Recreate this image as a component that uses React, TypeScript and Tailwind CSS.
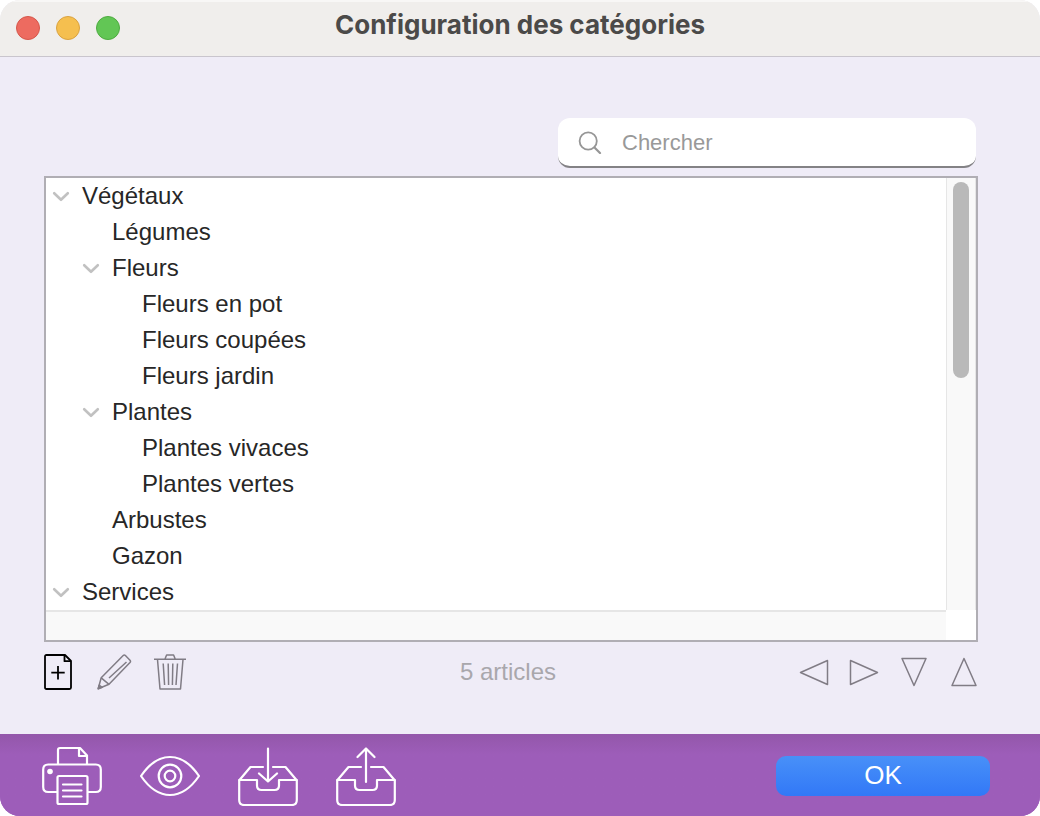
import { useState, type ReactNode } from "react";

type Category = { name: string; children?: Category[] };

const categories: Category[] = [
  {
    name: "Végétaux",
    children: [
      { name: "Légumes" },
      {
        name: "Fleurs",
        children: [{ name: "Fleurs en pot" }, { name: "Fleurs coupées" }, { name: "Fleurs jardin" }],
      },
      {
        name: "Plantes",
        children: [{ name: "Plantes vivaces" }, { name: "Plantes vertes" }],
      },
      { name: "Arbustes" },
      { name: "Gazon" },
    ],
  },
  { name: "Services", children: [] },
];

function CategoryNode({ category }: { category: Category }) {
  const [open, setOpen] = useState(true);
  return (
    <li>
      <div className="flex h-9 items-center gap-3">
        {category.children ? (
          <button
            type="button"
            aria-label={category.name}
            aria-expanded={open}
            onClick={() => setOpen(!open)}
            className="flex h-9 w-[18px] items-center justify-center"
          >
            <svg
              viewBox="0 0 18 12"
              className={open ? "h-3 w-[18px]" : "h-3 w-[18px] -rotate-90"}
              fill="none"
              stroke="#c1c1c1"
              strokeWidth="2.6"
              strokeLinecap="round"
              strokeLinejoin="round"
            >
              <path d="M2.2 3.2 9 9.8 15.8 3.2" />
            </svg>
          </button>
        ) : (
          <span className="w-[18px]" />
        )}
        <span>{category.name}</span>
      </div>
      {open && category.children && category.children.length > 0 && (
        <ul className="pl-[30px]">
          {category.children.map((child) => (
            <CategoryNode key={child.name} category={child} />
          ))}
        </ul>
      )}
    </li>
  );
}

function ToolButton({ label, children }: { label: string; children: ReactNode }) {
  return (
    <button type="button" aria-label={label} className="size-9">
      <svg viewBox="0 0 36 36" className="size-9" fill="none" stroke="#807c85" strokeWidth="1.5" strokeLinejoin="round">
        {children}
      </svg>
    </button>
  );
}

function BarButton({ label, children }: { label: string; children: ReactNode }) {
  return (
    <button type="button" aria-label={label} className="size-[60px]">
      <svg
        viewBox="0 0 60 60"
        className="size-[60px]"
        fill="none"
        stroke="#ffffff"
        strokeWidth="2.2"
        strokeLinecap="round"
        strokeLinejoin="round"
      >
        {children}
      </svg>
    </button>
  );
}

function Tray() {
  return (
    <>
      <path d="M25 21H12.5L1.5 34M35 21H47.5L58.5 34" />
      <path d="M1.2 34H19V39.5Q19 44 23.5 44H36.5Q41 44 41 39.5V34H58.8V54Q58.8 59 53.800 59H6.200Q1.200 59 1.200 54Z" />
    </>
  );
}

export default function App() {
  return (
    <div className="flex min-h-screen flex-col overflow-hidden rounded-[20px] bg-[#efecf7] font-['Liberation_Sans',Arial,sans-serif] text-2xl text-[#272727]">
      <header className="relative flex h-[57px] items-start justify-center border-t-2 border-b border-t-[#f8f7f6] border-b-[#c9c5cd] bg-[#f0eeec] pt-1">
        <div className="absolute top-[14px] left-4 flex gap-4">
          <button type="button" aria-label="Fermer" className="size-6 rounded-full border border-[#d5574b] bg-[#ed6b60]" />
          <button type="button" aria-label="Réduire" className="size-6 rounded-full border border-[#d9a240] bg-[#f5bf4f]" />
          <button type="button" aria-label="Agrandir" className="size-6 rounded-full border border-[#4eab40] bg-[#62c655]" />
        </div>
        <h1 className="font-[Inter,sans-serif] text-[26px] leading-[38px] font-bold text-[#4b4a49]">
          Configuration des catégories
        </h1>
      </header>

      <main className="flex flex-1 flex-col pt-[61px] pr-[62px] pl-11">
        <label className="mr-0.5 mb-2 flex h-[50px] w-[418px] items-center gap-5 self-end rounded-xl border-b-2 border-[#838285] bg-white pr-4 pl-5">
          <svg viewBox="0 0 24 24" className="size-6" fill="none" stroke="#969696" strokeLinecap="round">
            <circle cx="10.2" cy="11" r="8.6" strokeWidth="1.8" />
            <path d="M16.500 17.500 22 23" strokeWidth="2.2" />
          </svg>
          <input
            type="text"
            aria-label="Chercher"
            placeholder="Chercher"
            className="min-w-0 flex-1 bg-transparent pt-0.5 text-[22px] outline-none placeholder:text-[#999999]"
          />
        </label>

        <section aria-label="Catégories" className="grid grid-cols-[1fr_30px] border-2 border-[#b0aeb4] bg-white">
          <ul className="h-108 overflow-hidden pl-1.5">
            {categories.map((category) => (
              <CategoryNode key={category.name} category={category} />
            ))}
          </ul>
          <div className="border-x border-[#e6e6e6] bg-[#f9f9f9] pt-1">
            <div className="mx-auto h-[196px] w-4 rounded-full bg-[#b9b9b9]" />
          </div>
          <div className="h-[30px] border-t-2 border-[#e6e6e6] bg-[#f9f9f9]" />
        </section>

        <div className="-mx-1 grid grid-cols-[1fr_auto_1fr] items-center pt-3">
          <div className="flex gap-5">
            <ToolButton label="Ajouter">
              <g stroke="#000000" strokeWidth="1.8">
                <path d="M6.5 1H25L31 7V33.500Q31 35 29.500 35H6.500Q5 35 5 33.500V2.500Q5 1 6.500 1Z" />
                <path d="M24.500 1V7.200H31" />
                <path d="M18 12V25.400M11.300 18.700H24.700" />
              </g>
            </ToolButton>
            <ToolButton label="Modifier">
              <path d="M2.200 34.800 5.200 23.800 27.200 1.500Q28.300.400 29.400 1.500L34 6.300Q35 7.400 34 8.500L13 30.300Z" />
              <path d="M5.200 23.800 13 30.300M13 24 30.500 8" />
              <path d="M2.200 34.800 3.100 31.200 6.200 33.300Z" fill="#807c85" />
            </ToolButton>
            <ToolButton label="Supprimer">
              <path d="M2 5.2H34M13 5 14.600 1H21.600L23.200 5M5.500 5.500 8 35H28.500L31 5.500" />
              <path d="M11.200 9.500 12.600 31M16.200 9.500 16.600 31M20.800 9.500 20.400 31M25.500 9.500 24 31" />
            </ToolButton>
          </div>
          <span className="pr-1.5 leading-9 text-[#a9a7ac]">5 articles</span>
          <div className="flex justify-end gap-3.5">
            <ToolButton label="Gauche">
              <path d="M31.5 6.5V30.5L4.5 18.5Z" />
            </ToolButton>
            <ToolButton label="Droite">
              <path d="M4.5 6.5V30.5L31.5 18.5Z" />
            </ToolButton>
            <ToolButton label="Bas">
              <path d="M6 4.5H30L18 31.5Z" />
            </ToolButton>
            <ToolButton label="Haut">
              <path d="M6 31.5H30L18 4.5Z" />
            </ToolButton>
          </div>
        </div>
      </main>

      <footer className="flex h-[82px] items-start justify-between bg-[#9d5db9] bg-linear-to-b from-[#9357aa] to-[#9d5db9] to-25% pt-3 pr-[50px] pl-[42px]">
        <div className="flex gap-[38px]">
          <BarButton label="Imprimer">
            <path d="M16 18V4Q16 2 18 2H38L45 9.500V18" />
            <path d="M37 2V10H45" />
            <path d="M15 46H6.200Q1.200 46 1.200 41V23.500Q1.200 18.500 6.200 18.500H53.800Q58.800 18.500 58.800 23.500V41Q58.800 46 53.800 46H46" />
            <circle cx="8" cy="25.500" r="2.8" fill="#ffffff" stroke="none" />
            <path d="M17 30H44Q45.500 30 45.500 31.500V56.500Q45.500 58 44 58H17Q15.500 58 15.500 56.500V31.500Q15.500 30 17 30ZM21 38.500H39.500M21 44.500H39.500M21 50.500H39.500" />
          </BarButton>
          <BarButton label="Aperçu">
            <path d="M1 30Q14 11 30 11T59 30Q46 49 30 49T1 30Z" />
            <circle cx="30" cy="30" r="11.3" />
            <circle cx="30" cy="30" r="5.3" />
          </BarButton>
          <BarButton label="Importer">
            <Tray />
            <path d="M30 2.500V35.500M21 27.500 30 35.500 39 27.500" />
          </BarButton>
          <BarButton label="Exporter">
            <Tray />
            <path d="M30 36V2.500M21.500 11 30 2.500 38.500 11" />
          </BarButton>
        </div>
        <button
          type="button"
          className="mt-2.5 h-10 w-[214px] rounded-[10px] bg-linear-to-b from-[#4890f8] to-[#3278f7] pb-0.5 text-[26px] leading-9 text-white"
        >
          OK
        </button>
      </footer>
    </div>
  );
}
